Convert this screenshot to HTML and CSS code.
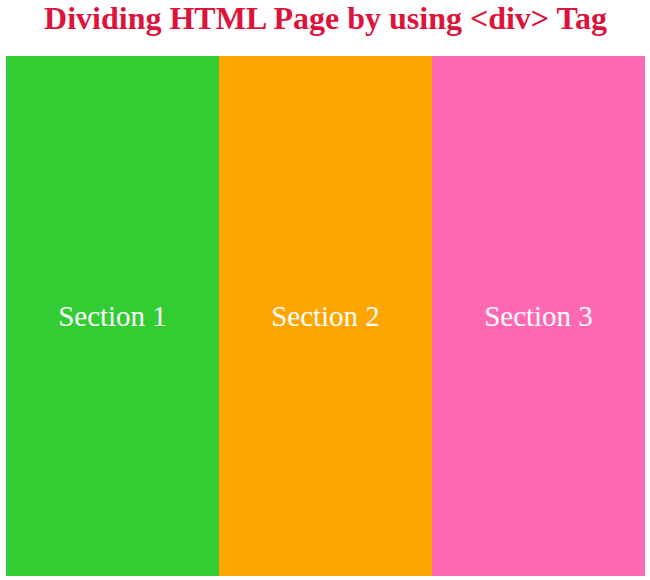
FILE: index.html
```html
<!DOCTYPE html>
<html lang="en">

<head>
    <meta charset="UTF-8">
    <meta name="viewport" content="width=device-width, initial-scale=1.0">
    <title>Dividing HTML Page</title>
    <link rel="stylesheet" href="styles.css">
</head>

<body>
    <h1>Dividing HTML Page by using &lt;div&gt; Tag</h1>
    <div class="container">
        <div class="section green">Section 1</div>
        <div class="section orange">Section 2</div>
        <div class="section pink">Section 3</div>
    </div>
</body>

</html>
```

FILE: styles.css
```css
body {
    margin: 0;
    padding: 0 5px 0 6px;
    font-family: "Liberation Serif", "Times New Roman", serif;
}

h1 {
    color: crimson;
    text-align: center;
    font-size: 32px;
    line-height: 36px;
    margin: 0;
    padding-bottom: 20px;
}

.container {
    display: flex;
    height: 520px;
}

.section {
    flex: 1;
    display: flex;
    align-items: center;
    justify-content: center;
    color: white;
    font-size: 29px;
}

.green {
    background-color: limegreen;
}

.orange {
    background-color: orange;
}

.pink {
    background-color: hotpink;
}
```
